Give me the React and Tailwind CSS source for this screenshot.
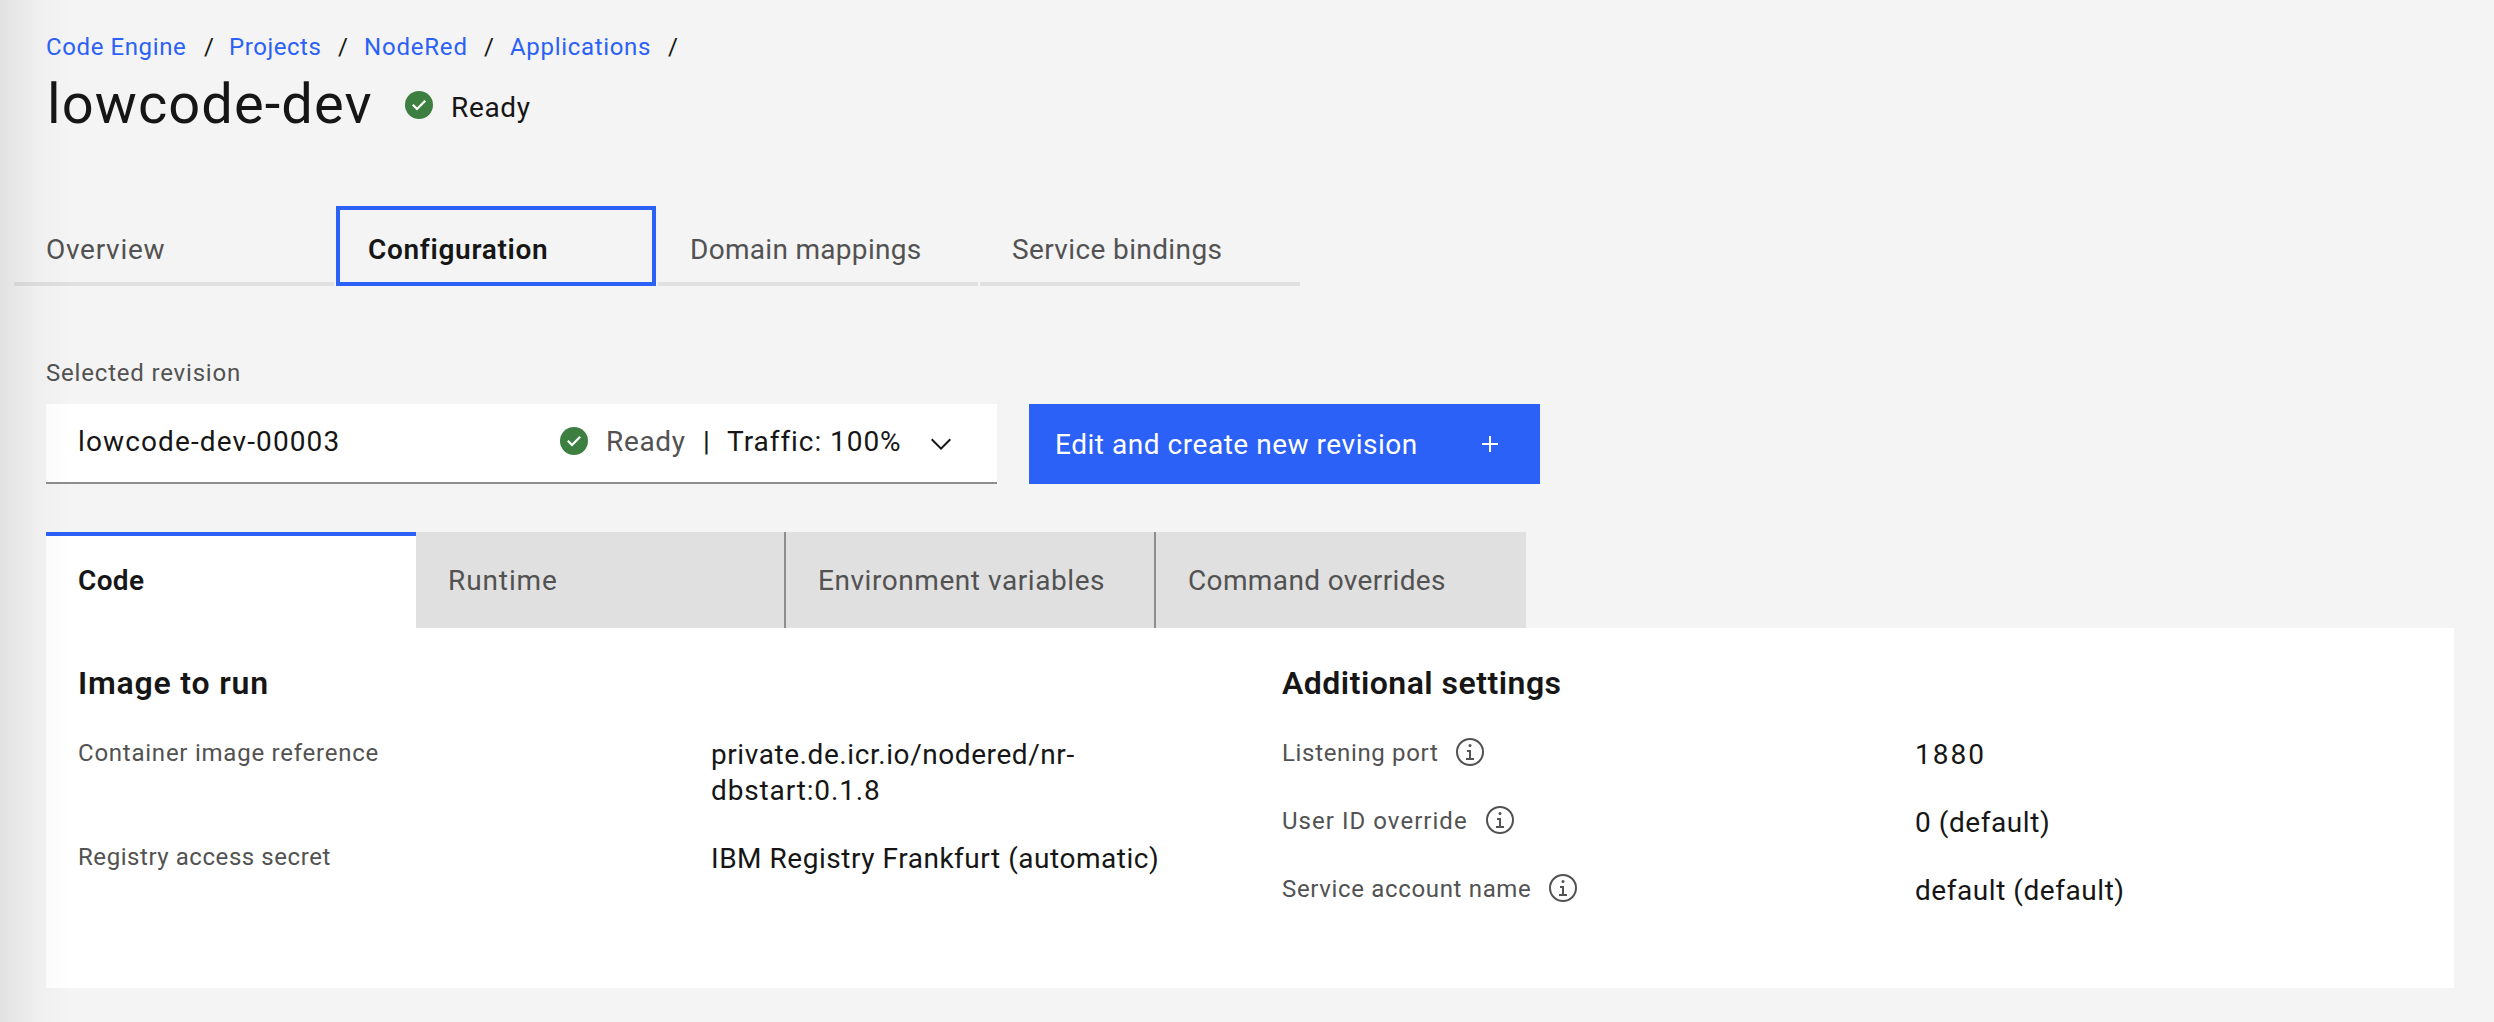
import React from "react";

function CheckmarkFilled({ className = "" }) {
  return (
    <svg viewBox="0 0 32 32" className={`size-8 shrink-0 ${className}`}>
      <circle cx="16" cy="16" r="14" fill="#3d7f40" />
      <path d="M14 21.59l-5-5L10.59 15 14 18.41 21.41 11l1.6 1.59Z" fill="#fff" />
    </svg>
  );
}

function Information() {
  return (
    <svg viewBox="0 0 32 32" fill="#525252" className="size-8 shrink-0">
      <path d="M17 22V14H13v2h2v6H12v2h8V22Z" />
      <circle cx="16" cy="9.5" r="1.5" />
      <circle cx="16" cy="16" r="13" fill="none" stroke="#525252" strokeWidth="2" />
    </svg>
  );
}

const crumbs = [
  { label: "Code Engine", width: "w-[158px]", tracking: "tracking-[0.6px]", sep: "w-[25px]" },
  { label: "Projects", width: "w-[109px]", tracking: "tracking-[0.56px]", sep: "w-[26px]" },
  { label: "NodeRed", width: "w-[120px]", tracking: "tracking-[0.8px]", sep: "w-[26px]" },
  { label: "Applications", width: "w-[158px]", tracking: "tracking-[0.68px]", sep: "w-[20px]" },
];

const pageTabs = [
  { label: "Overview", tracking: "tracking-[0.72px]" },
  { label: "Configuration", tracking: "tracking-[0.69px]", active: true },
  { label: "Domain mappings", tracking: "tracking-[0.3px]" },
  { label: "Service bindings", tracking: "tracking-[0.38px]" },
];

const sectionTabs = [
  { label: "Code", tracking: "tracking-[0.36px]", look: "border-t-4 border-[#2b61f7] bg-white pt-[27px] font-semibold text-[#161616]" },
  { label: "Runtime", tracking: "tracking-[0.9px]", look: "border-r-2 border-[#8d8d8d] bg-[#e0e0e0] pt-[31px] text-[#525252]" },
  { label: "Environment variables", tracking: "tracking-[0.56px]", look: "border-r-2 border-[#8d8d8d] bg-[#e0e0e0] pt-[31px] text-[#525252]" },
  { label: "Command overrides", tracking: "tracking-[0.37px]", look: "bg-[#e0e0e0] pt-[31px] text-[#525252]" },
];

const imageRows = [
  {
    label: "Container image reference",
    labelTracking: "tracking-[0.76px]",
    value: (
      <>
        <span className="tracking-[0.57px]">private.de.icr.io/nodered/nr-</span>
        <br />
        <span className="tracking-[0.86px]">dbstart:0.1.8</span>
      </>
    ),
  },
  {
    label: "Registry access secret",
    labelTracking: "tracking-[0.56px]",
    value: <span className="tracking-[0.53px]">IBM Registry Frankfurt (automatic)</span>,
  },
];

const settingRows = [
  { label: "Listening port", labelTracking: "tracking-[0.66px]", info: true, value: <span className="tracking-[2px]">1880</span> },
  { label: "User ID override", labelTracking: "tracking-[1.04px]", info: true, value: <span className="tracking-[0.57px]">0 (default)</span> },
  { label: "Service account name", labelTracking: "tracking-[0.66px]", info: true, value: <span className="tracking-[0.55px]">default (default)</span> },
];

function Details({ title, titleTracking, rows }) {
  return (
    <section className="w-[1204px] shrink-0">
      <h2 className={`text-[32px] leading-10 font-semibold ${titleTracking}`}>{title}</h2>
      <dl className="mt-[33px] flex flex-col gap-8">
        {rows.map((row) => (
          <div key={row.label} className="flex text-[28px] leading-9">
            <dt className="flex h-8 w-[633px] gap-4 text-2xl leading-[34px] text-[#525252]">
              <span className={row.labelTracking}>{row.label}</span>
              {row.info && <Information />}
            </dt>
            <dd className="pt-px -mb-px">{row.value}</dd>
          </div>
        ))}
      </dl>
    </section>
  );
}

export default function App() {
  return (
    <div className="relative h-[1022px] w-[2494px] overflow-hidden bg-[#f4f4f4] pt-[31px] font-['Roboto',sans-serif] text-[#161616]">
      <nav className="flex pl-[46px] text-2xl leading-8">
        {crumbs.map((c) => (
          <React.Fragment key={c.label}>
            <a className={`text-[#2b61f7] ${c.width} ${c.tracking}`}>{c.label}</a>
            <span className={c.sep}>/</span>
          </React.Fragment>
        ))}
      </nav>

      <header className="mt-[5px] flex h-[72px] pl-[47px]">
        <h1 className="w-[356px] text-[56px] leading-[72px] tracking-[1.09px]">lowcode-dev</h1>
        <CheckmarkFilled className="mt-[21px]" />
        <span className="mt-[22px] ml-4 text-[28px] leading-9 tracking-[0.65px]">Ready</span>
      </header>

      <div className="mt-[66px] flex gap-0.5 pl-3.5 text-[28px] leading-9">
        {pageTabs.map((t) => (
          <div
            key={t.label}
            className={`h-20 w-80 ${t.tracking} ${
              t.active
                ? "border-4 border-[#2b61f7] pt-[22px] pl-7 font-semibold"
                : "border-b-4 border-[#e0e0e0] pt-[26px] pl-8 text-[#525252]"
            }`}
          >
            {t.label}
          </div>
        ))}
      </div>

      <main className="mt-[71px] px-[46px]">
        <label className="block text-2xl leading-8 tracking-[0.81px] text-[#525252]">Selected revision</label>
        <div className="mt-[15px] flex gap-8 text-[28px] leading-9">
          <div className="flex h-20 w-[951px] border-b-2 border-[#8d8d8d] bg-white pt-5 pl-8">
            <span className="w-[480px] tracking-[1.12px]">lowcode-dev-00003</span>
            <CheckmarkFilled className="mt-px" />
            <span className="ml-4 w-[97px] tracking-[0.65px] text-[#525252]">Ready</span>
            <span className="w-[24px]">|</span>
            <span className="w-[198px] tracking-[0.95px]">Traffic: 100%</span>
            <svg viewBox="0 0 16 16" fill="#161616" className="mt-1 size-8">
              <path d="M8 11L3 6 3.7 5.3 8 9.6 12.3 5.3 13 6z" />
            </svg>
          </div>
          <button className="flex h-20 w-[511px] bg-[#2b61f7] pt-[23px] pl-[26px] text-left text-white">
            <span className="w-[419px] tracking-[0.53px]">Edit and create new revision</span>
            <svg viewBox="0 0 32 32" fill="#fff" className="mt-px size-8">
              <path d="M17 15V8H15V15H8V17H15V24H17V17H24V15Z" />
            </svg>
          </button>
        </div>

        <div className="mt-12 flex text-[28px] leading-9">
          {sectionTabs.map((t) => (
            <div key={t.label} className={`h-24 w-[370px] pl-8 ${t.tracking} ${t.look}`}>
              {t.label}
            </div>
          ))}
        </div>
        <div className="flex h-[360px] w-[2408px] overflow-hidden bg-white pt-[35px] pl-8">
          <Details title="Image to run" titleTracking="tracking-[0.8px]" rows={imageRows} />
          <Details title="Additional settings" titleTracking="tracking-[0.49px]" rows={settingRows} />
        </div>
      </main>

      <div className="pointer-events-none absolute inset-y-0 left-0 w-[72px] bg-linear-to-r from-black/[0.075] via-black/[0.02] to-transparent" />
    </div>
  );
}
